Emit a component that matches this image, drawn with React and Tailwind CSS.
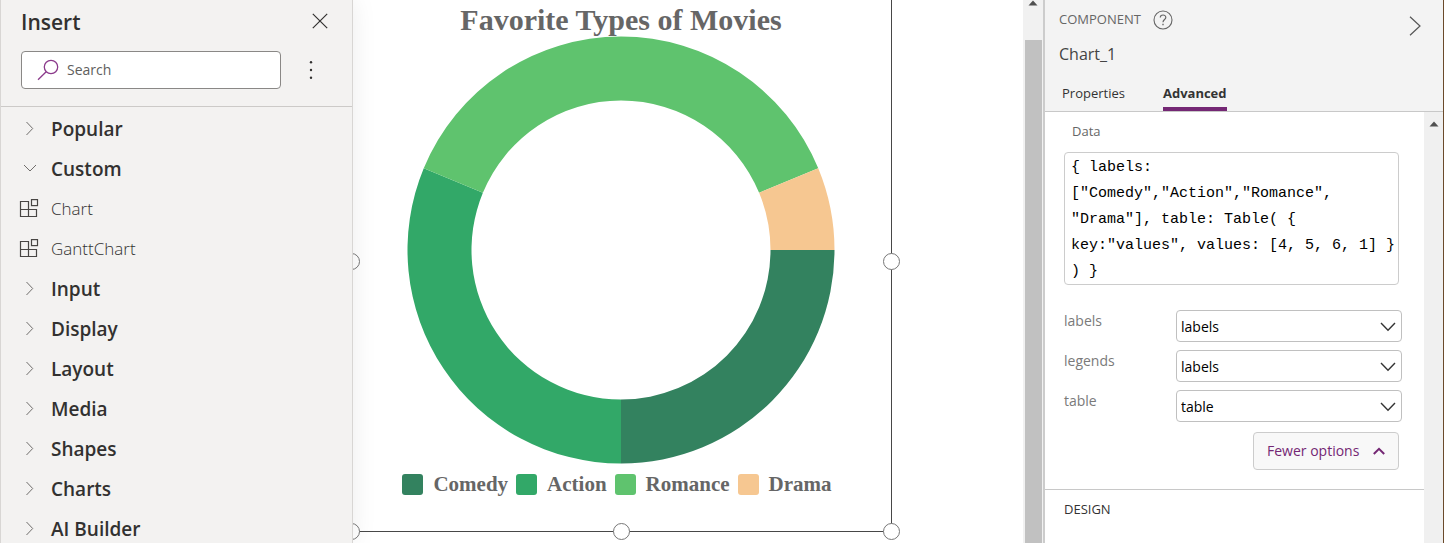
const categories = [
  { name: 'Popular' },
  { name: 'Custom', items: ['Chart', 'GanttChart'] },
  { name: 'Input' },
  { name: 'Display' },
  { name: 'Layout' },
  { name: 'Media' },
  { name: 'Shapes' },
  { name: 'Charts' },
  { name: 'AI Builder' },
];

const series = [
  { label: 'Comedy', value: 4, fill: 'fill-[#33825f]', swatch: 'bg-[#33825f]' },
  { label: 'Action', value: 5, fill: 'fill-[#32a868]', swatch: 'bg-[#32a868]' },
  { label: 'Romance', value: 6, fill: 'fill-[#5fc36e]', swatch: 'bg-[#5fc36e]' },
  { label: 'Drama', value: 1, fill: 'fill-[#f6c791]', swatch: 'bg-[#f6c791]' },
];

const formula =
  '{ labels:\n["Comedy","Action","Romance",\n"Drama"], table: Table( {\nkey:"values", values: [4, 5, 6, 1] }\n) }';

function Chevron({ open }) {
  return (
    <svg viewBox="0 0 14 16" className="h-4 w-3.5 shrink-0 fill-none stroke-[#706e6c]" aria-hidden="true">
      <path d={open ? 'M1 4 L7 10 L13 4' : 'M3.5 1 L9.7 7.5 L3.5 14'} />
    </svg>
  );
}

function ComponentIcon() {
  return (
    <svg viewBox="0 0 20 20" className="size-5 shrink-0 fill-none stroke-[#484644]" aria-hidden="true">
      <path strokeWidth="1.2" d="M9.5 10.5V2.5H1.5V17.5H17.5V10.5H1.5M9.5 10.5V17.5" />
      <rect strokeWidth="1.2" x="12.5" y="0.6" width="6" height="6" />
    </svg>
  );
}

function InsertPanel() {
  return (
    <aside className="relative z-10 flex w-[353px] shrink-0 flex-col border-x border-[#d8d6d4] bg-[#f3f2f1] text-[#323130] shadow-[0_0_24px_rgba(0,0,0,0.08)]">
      <header className="border-b border-[#cccac8] pb-[17px] pl-5">
        <div className="flex h-11 items-center justify-between pr-5">
          <h2 className="text-[21px] leading-7 font-semibold">Insert</h2>
          <button aria-label="Close" className="flex size-6 items-center justify-center pb-0.5">
            <svg viewBox="0 0 16 16" className="size-4 fill-none stroke-[#323130]">
              <path strokeWidth="1.2" d="M0.8 0.8 L15.2 15.2 M15.2 0.8 L0.8 15.2" />
            </svg>
          </button>
        </div>
        <div className="mt-[7px] flex items-center gap-[18px]">
          <label className="flex h-[38px] w-[260px] items-center gap-2 rounded-sm border border-[#8a8886] bg-white pl-[15px]">
            <svg viewBox="0 0 22 22" className="size-[22px] shrink-0 fill-none stroke-[#8b3a8b]" aria-hidden="true">
              <circle cx="14" cy="8" r="6.7" strokeWidth="1.3" />
              <path strokeWidth="1.3" d="M9.2 12.7 L1 20.8" />
            </svg>
            <input
              type="text"
              aria-label="Search"
              placeholder="Search"
              className="w-full bg-transparent text-sm outline-none placeholder:text-[#605e5c]"
            />
          </label>
          <button aria-label="More options" className="flex size-6 items-center justify-center">
            <svg viewBox="0 0 4 20" className="h-5 w-1 fill-[#323130]">
              <circle cx="2" cy="2.3" r="1.2" />
              <circle cx="2" cy="10" r="1.2" />
              <circle cx="2" cy="17.7" r="1.2" />
            </svg>
          </button>
        </div>
      </header>
      <ul className="pt-0.5">
        {categories.map((c) => (
          <li key={c.name}>
            <button className="flex h-10 w-full items-center gap-[14px] pl-[22px] text-left text-[19px] font-semibold">
              <Chevron open={!!c.items} />
              {c.name}
            </button>
            {c.items && (
              <ul>
                {c.items.map((item) => (
                  <li key={item}>
                    <button className="flex h-10 w-full items-center gap-3 pl-[18px] text-left text-[17px] font-light">
                      <ComponentIcon />
                      {item}
                    </button>
                  </li>
                ))}
              </ul>
            )}
          </li>
        ))}
      </ul>
    </aside>
  );
}

function Doughnut() {
  const total = series.reduce((sum, s) => sum + s.value, 0);
  const center = 214;
  const outer = 213.5;
  const inner = 149.5;
  const point = (radius, angle) =>
    `${center + radius * Math.cos(angle)} ${center + radius * Math.sin(angle)}`;
  let start = 0;
  return (
    <svg viewBox="0 0 428 428" className="size-[428px] shrink-0" role="img" aria-label="Favorite Types of Movies">
      {series.map((s) => {
        const from = start;
        const to = start + (s.value / total) * 2 * Math.PI;
        start = to;
        return (
          <path
            key={s.label}
            className={s.fill}
            d={`M${point(outer, from)} A${outer} ${outer} 0 0 1 ${point(outer, to)} L${point(inner, to)} A${inner} ${inner} 0 0 0 ${point(inner, from)} Z`}
          />
        );
      })}
    </svg>
  );
}

function Handle({ place }) {
  return <span className={`absolute size-[17px] rounded-full border border-[#777777] bg-white ${place}`} />;
}

function Canvas() {
  return (
    <main className="relative min-w-0 flex-1 overflow-hidden bg-white">
      <div className="absolute -top-[9px] -left-[2px] flex size-[541px] flex-col items-center border border-[#484848] pt-3 pr-px font-['Liberation_Serif',serif] font-bold text-[#666666]">
        <h1 className="text-[30px] leading-8">Favorite Types of Movies</h1>
        <Doughnut />
        <ul className="mt-2 flex">
          {series.map((s) => (
            <li key={s.label} className="mr-2 flex items-center gap-2.5 text-[21px] leading-6">
              <span className={`size-[21px] rounded-[3px] ${s.swatch}`} />
              {s.label}
            </li>
          ))}
        </ul>
        <Handle place="top-[261px] -left-[9px]" />
        <Handle place="top-[261px] -right-[9px]" />
        <Handle place="-bottom-[9px] -left-[9px]" />
        <Handle place="-bottom-[9px] left-[261px]" />
        <Handle place="-right-[9px] -bottom-[9px]" />
      </div>
    </main>
  );
}

function UpArrow() {
  return (
    <svg viewBox="0 0 10 6" className="h-1.5 w-2.5 fill-[#505050]" aria-hidden="true">
      <path d="M5 0.5 L9.5 5.5 H0.5 Z" />
    </svg>
  );
}

function SelectRow({ label, value }) {
  return (
    <div className="flex items-start justify-between">
      <label htmlFor={`field-${label}`} className="text-sm leading-[22px] text-[#7a7a7a]">
        {label}
      </label>
      <div className="relative w-[226px]">
        <select
          id={`field-${label}`}
          className="h-8 w-full appearance-none rounded-sm border border-[#c0c0c0] bg-white px-1 pt-0.5 text-sm text-black"
        >
          <option>{value}</option>
        </select>
        <svg
          viewBox="0 0 16 10"
          className="pointer-events-none absolute top-3 right-1.5 h-2.5 w-4 fill-none stroke-[#333333]"
          aria-hidden="true"
        >
          <path strokeWidth="1.4" d="M1 1 L8 8.2 L15 1" />
        </svg>
      </div>
    </div>
  );
}

function PropertiesPanel() {
  return (
    <aside className="flex w-[401px] shrink-0 flex-col border-r border-l-2 border-r-[#6b4a2b] border-l-[#cccccc] bg-white">
      <header className="border-b border-[#c8c8c8] bg-[#f3f3f3] pr-[22px] pl-3.5">
        <div className="flex justify-between pt-2">
          <div>
            <div className="flex h-6 items-center gap-3 text-[13px] text-[#666666]">
              COMPONENT
              <button aria-label="Help">
                <svg viewBox="0 0 20 20" className="block size-5 fill-none stroke-[#666666]">
                  <circle cx="10" cy="10" r="9" strokeWidth="1.1" />
                  <path strokeWidth="1.2" d="M7.3 7.6 C7.3 4.2 12.8 4.2 12.8 7.4 C12.8 9.4 10 9.6 10 12.2" />
                  <path strokeWidth="1.4" d="M10 13.8 V15.2" />
                </svg>
              </button>
            </div>
            <h2 className="mt-2.5 text-base leading-6 text-[#444444]">Chart_1</h2>
          </div>
          <button aria-label="Collapse panel" className="mt-2 h-5 w-3">
            <svg viewBox="0 0 12 20" className="h-5 w-3 fill-none stroke-[#555555]">
              <path strokeWidth="1.2" d="M1 0.8 L11 10 L1 19.2" />
            </svg>
          </button>
        </div>
        <div role="tablist" className="mt-[13px] flex gap-[38px] pl-[3px] text-[13px] leading-7 text-[#333333]">
          <button role="tab" aria-selected="false" className="border-b-4 border-transparent">
            Properties
          </button>
          <button role="tab" aria-selected="true" className="border-b-4 border-[#742774] font-bold">
            Advanced
          </button>
        </div>
      </header>
      <div className="flex min-h-0 flex-1">
        <div className="min-w-0 flex-1">
          <section className="border-b border-[#c8c8c8] pr-[22px] pb-[19px] pl-[19px]">
            <label htmlFor="data" className="block pt-[7px] pl-2 text-[13px] leading-6 text-[#666666]">
              Data
            </label>
            <textarea
              id="data"
              rows={5}
              defaultValue={formula}
              className="mt-[9px] block h-[133px] w-[335px] resize-none overflow-hidden rounded-sm border border-[#cccccc] pt-0.5 pl-1.5 font-['Liberation_Mono',monospace] text-[15px] leading-[26px] text-black"
            />
            <div className="mt-[25px] flex flex-col gap-2">
              <SelectRow label="labels" value="labels" />
              <SelectRow label="legends" value="labels" />
              <SelectRow label="table" value="table" />
            </div>
            <div className="mt-2.5 flex justify-end pr-[3px]">
              <button className="flex h-[38px] w-[146px] items-center justify-between rounded-sm border border-[#cccccc] bg-[#f8f8f8] px-[13px] text-sm text-[#742774]">
                Fewer options
                <svg viewBox="0 0 12 8" className="h-2 w-3 fill-none stroke-[#742774]" aria-hidden="true">
                  <path strokeWidth="2" d="M0.8 7 L6 1.8 L11.2 7" />
                </svg>
              </button>
            </div>
          </section>
          <h3 className="pt-[7px] pl-[19px] text-[13px] leading-6 text-[#333333]">DESIGN</h3>
        </div>
        <div className="flex w-[19px] justify-center bg-[#f0f0f0] pt-[9px]">
          <UpArrow />
        </div>
      </div>
    </aside>
  );
}

export default function App() {
  return (
    <div className="flex h-screen overflow-hidden bg-white font-['Open_Sans',sans-serif]">
      <InsertPanel />
      <Canvas />
      <div className="flex w-5 shrink-0 flex-col items-center bg-[#f1f1f1]">
        <div className="flex h-10 items-start">
          <UpArrow />
        </div>
        <div className="w-[17px] flex-1 bg-[#c1c1c1]" />
      </div>
      <PropertiesPanel />
    </div>
  );
}
